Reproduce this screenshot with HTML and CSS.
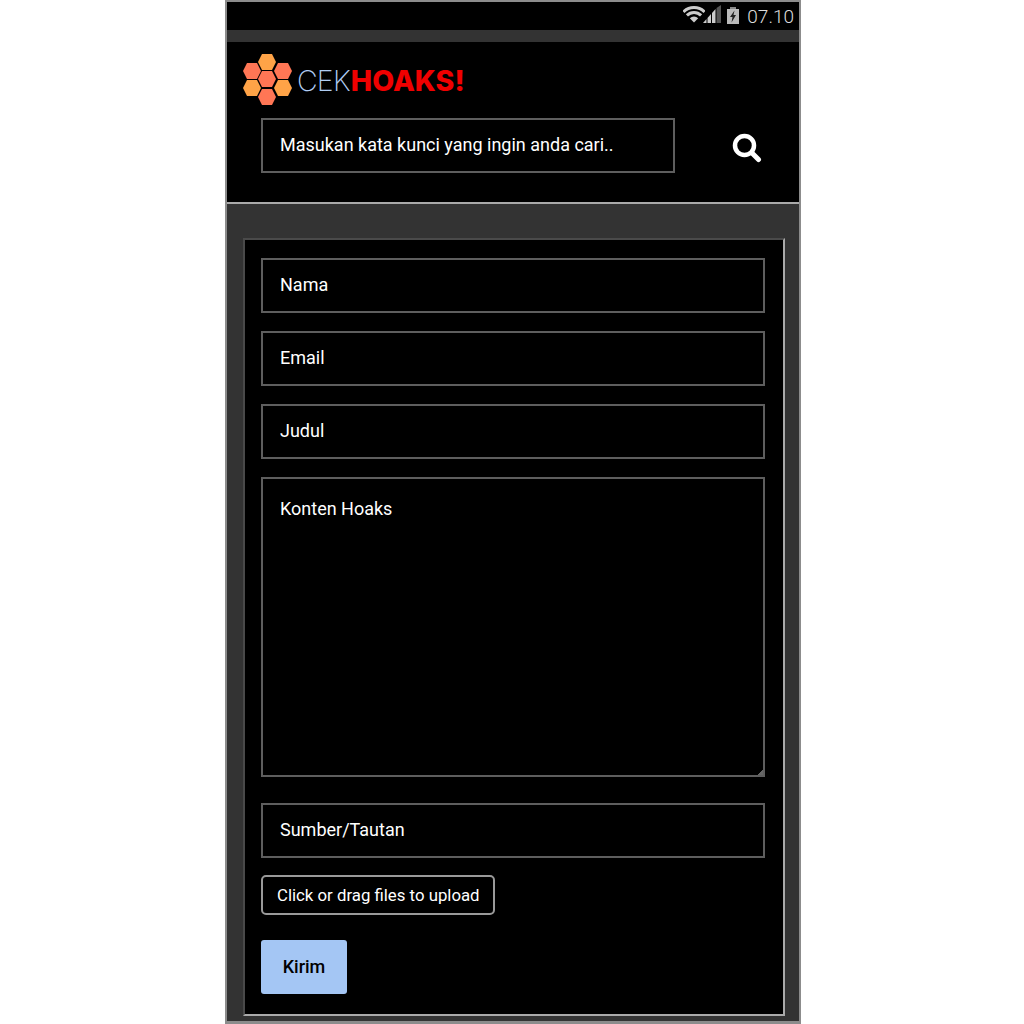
FILE: index.html
```html
<!DOCTYPE html>
<html lang="en">

<head>
    <meta charset="UTF-8">
    <meta name="viewport" content="width=device-width, initial-scale=1.0">
    <title>Cek Hoaks</title>
    <link rel="stylesheet" href="styles.css">
</head>

<body>
    <div class="phone">
        <!-- Status bar -->
        <div class="status-bar">
            <svg class="wifi" width="22" height="17" viewBox="0 0 22 17">
                <path d="M0.400 5.900 A15 15 0 0 1 21.600 5.900" fill="none" stroke="#ccc" stroke-width="3" />
                <path d="M3.900 9.400 A10 10 0 0 1 18.100 9.400" fill="none" stroke="#ccc" stroke-width="3" />
                <path d="M11 16.500 L6.800 12.300 A6 6 0 0 1 15.200 12.300 Z" fill="#ccc" />
            </svg>
            <svg class="signal" width="18" height="18" viewBox="0 0 18 18">
                <polygon points="0,18 3.500,18 3.500,14 0,18" fill="#ccc" />
                <polygon points="4.500,18 8,18 8,9 4.500,13" fill="#ccc" />
                <polygon points="9,18 12.500,18 12.500,4 9,8" fill="#ccc" />
                <polygon points="13.500,18 18,18 18,0 13.500,3" fill="#555" />
            </svg>
            <svg class="battery" width="12" height="17" viewBox="0 0 12 17">
                <rect x="3" y="0" width="6" height="2" fill="#888" />
                <rect x="0" y="2" width="12" height="15" fill="#bbb" />
                <path d="M7.500 3.500 L3 10 L5.500 10 L4.500 15.500 L9 8 L6.500 8 Z" fill="#222" />
            </svg>
            <span class="clock">07.10</span>
        </div>
        <div class="status-gap"></div>

        <!-- Header -->
        <header class="header">
            <div class="logo">
                <svg width="50" height="52" viewBox="0 0 50 52">
                    <polygon points="19,0 29,0 33,8 29,16 19,16 15,8" fill="#ffa347" />
                    <polygon points="4,9 14,9 18,17 14,25 4,25 0,17" fill="#ff7655" />
                    <polygon points="35,9 45,9 49,17 45,25 35,25 31,17" fill="#ff7655" />
                    <polygon points="19,17 29,17 33,25 29,33 19,33 15,25" fill="#ff7655" />
                    <polygon points="4,26 14,26 18,34 14,42 4,42 0,34" fill="#ffa347" />
                    <polygon points="35,26 45,26 49,34 45,42 35,42 31,34" fill="#ffa347" />
                    <polygon points="19,35 29,35 33,43 29,51 19,51 15,43" fill="#ff7655" />
                </svg>
                <div class="logo-text"><span class="logo-cek">CEK</span><span class="logo-hoaks">HOAKS!</span></div>
            </div>
            <div class="search-row">
                <input class="field search-field" placeholder="Masukan kata kunci yang ingin anda cari..">
                <svg class="search-icon" width="30" height="30" viewBox="0 0 30 30">
                    <circle cx="12.500" cy="12.500" r="9.500" fill="none" stroke="#fff" stroke-width="4.500" />
                    <line x1="20" y1="20" x2="26.500" y2="26.500" stroke="#fff" stroke-width="5" stroke-linecap="round" />
                </svg>
            </div>
        </header>

        <!-- Form -->
        <main class="content">
            <form class="card">
                <input class="field" placeholder="Nama">
                <input class="field" placeholder="Email">
                <input class="field" placeholder="Judul">
                <textarea class="field konten" placeholder="Konten Hoaks"></textarea>
                <input class="field sumber" placeholder="Sumber/Tautan">
                <button type="button" class="upload">Click or drag files to upload</button>
                <button type="button" class="kirim">Kirim</button>
            </form>
        </main>
    </div>
</body>

</html>
```

FILE: styles.css
```css
body {
    margin: 0;
    background-color: white;
    font-family: Roboto, sans-serif;
}

.phone {
    box-sizing: border-box;
    width: 576px;
    height: 1024px;
    margin-left: 225px;
    border: 2px solid #8c8c8c;
    border-bottom-width: 3px;
    background-color: #333;
    display: flex;
    flex-direction: column;
    overflow: hidden;
}

.status-bar {
    height: 28px;
    flex-shrink: 0;
    background-color: black;
    display: flex;
    align-items: center;
    justify-content: flex-end;
    padding-right: 5px;
    color: #ddd;
}

.wifi {
    margin-bottom: 3px;
}

.signal {
    margin-left: -2px;
    margin-right: 6px;
    margin-bottom: 4px;
}

.battery {
    margin-right: 8px;
    margin-bottom: 2px;
}

.clock {
    font-size: 19px;
    font-weight: 300;
}

.status-gap {
    height: 12px;
    flex-shrink: 0;
}

.header {
    box-sizing: border-box;
    height: 162px;
    flex-shrink: 0;
    background-color: black;
    border-bottom: 2px solid #aaa;
    padding: 12px 34px 0 34px;
}

.logo {
    display: flex;
    align-items: center;
    gap: 4px;
    margin-left: -18px;
    height: 52px;
}

.logo-text {
    font-family: Inter, sans-serif;
    font-size: 28.500px;
    line-height: 1;
    padding-top: 3px;
}

.logo-cek {
    color: #b0cdf3;
    font-weight: 200;
    letter-spacing: -0.800px;
}

.logo-hoaks {
    color: #f00000;
    font-weight: 800;
    margin-left: 1px;
}

.search-row {
    display: flex;
    align-items: center;
    justify-content: space-between;
    margin-top: 12px;
    padding-right: 3px;
}

.field {
    display: block;
    box-sizing: border-box;
    width: 100%;
    height: 55px;
    padding: 0 17px 2px;
    background-color: black;
    border: 2px solid #5e5e5e;
    border-radius: 0;
    font-family: Roboto, sans-serif;
    font-size: 18px;
    color: white;
    outline: none;
}

.field::placeholder {
    color: white;
    opacity: 1;
}

.search-field {
    width: 414px;
}

.search-icon {
    margin-top: 5px;
}

.content {
    flex: 1;
    padding: 34px 14px 0 16px;
}

.card {
    box-sizing: border-box;
    height: 778px;
    background-color: black;
    border: 2px solid;
    border-color: #4a4a4a #aaa #aaa #4a4a4a;
    padding: 18px 18px 0 16px;
    display: flex;
    flex-direction: column;
    gap: 18px;
}

.konten {
    height: 300px;
    padding-top: 19px;
    resize: vertical;
}

.konten::-webkit-resizer {
    background: linear-gradient(135deg, transparent 80%, #666 80%);
}

.sumber {
    margin-top: 8px;
}

.upload {
    align-self: flex-start;
    height: 40px;
    margin-top: -1px;
    padding: 0 13px 0 14px;
    background-color: black;
    border: 2px solid #999;
    border-radius: 5px;
    color: white;
    font-family: Roboto, sans-serif;
    font-size: 16.800px;
}

.kirim {
    align-self: flex-start;
    width: 86px;
    height: 54px;
    margin-top: 7px;
    padding-bottom: 3px;
    background-color: #a4c6f4;
    border: none;
    border-radius: 3px;
    color: black;
    font-family: Roboto, sans-serif;
    font-size: 18px;
    font-weight: 500;
}
```
